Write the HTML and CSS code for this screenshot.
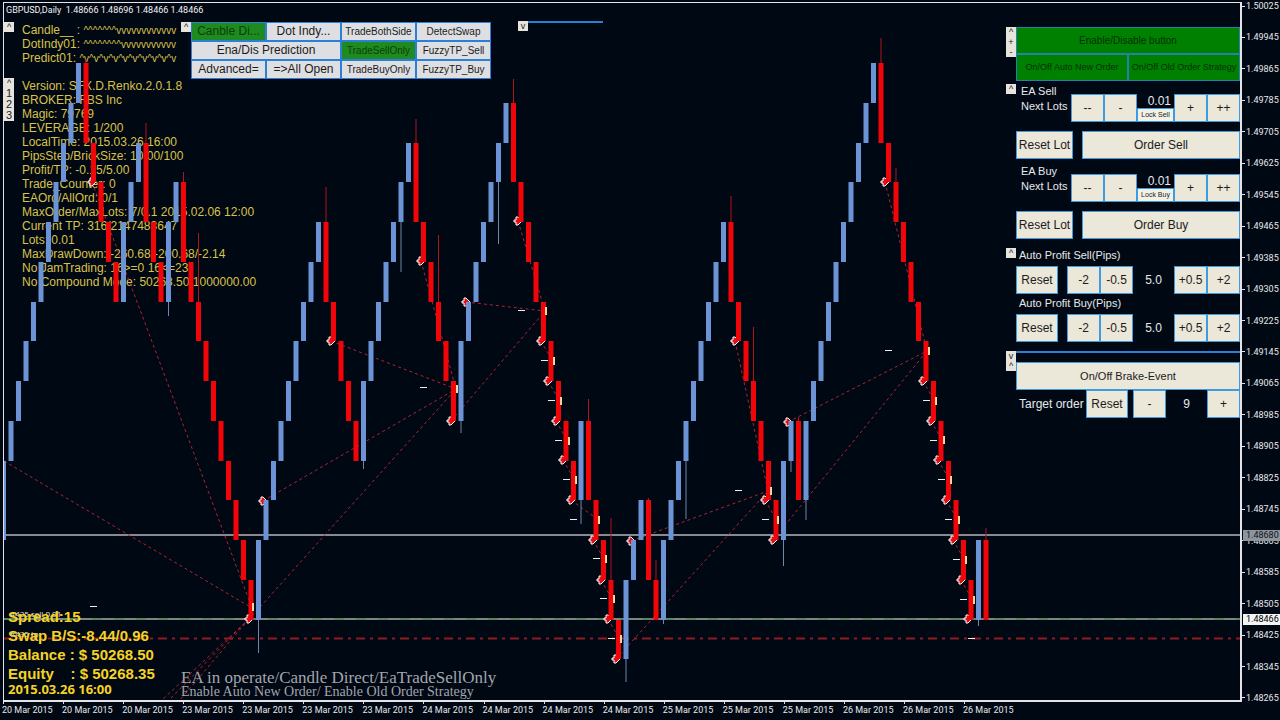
FILE: index.html
```html
<!DOCTYPE html>
<html lang="en">
<head>
<meta charset="utf-8">
<title>GBPUSD,Daily</title>
<link rel="stylesheet" href="styles.css">
</head>
<body>
<main class="terminal">
  <section class="chart">
    <div class="info">
      <p>Candle__ : <span class="wave">^^^^^^^vvvvvvvvvvvv</span></p>
      <p>DotIndy01: <span class="wave">^^^^^^^^vvvvvvvvvvv</span></p>
      <p>Predict01: <span class="wave">^v^v^v^v^v^v^v^v^v^v</span></p>
      <p class="gap">Version: SFX.D.Renko.2.0.1.8</p>
      <p>BROKER: FBS Inc</p>
      <p>Magic: 79769</p>
      <p>LEVERAGE: 1/200</p>
      <p>LocalTime: 2015.03.26 16:00</p>
      <p>PipsStep/BrickSize: 10.00/100</p>
      <p>Profit/TP: -0.15/5.00</p>
      <p>Trade_Counter: 0</p>
      <p>EAOrd/AllOrd: 0/1</p>
      <p>MaxOrder/MaxLots: 7/0.1 2015.02.06 12:00</p>
      <p>Current TP: 316/2147483647</p>
      <p>Lots: 0.01</p>
      <p>MaxDrawDown: -260.68/-200.68/-2.14</p>
      <p>No JamTrading: 16&gt;=0 16&lt;=23</p>
      <p>No Compound Mode: 50268.50 1000000.00</p>
    </div>

    <svg class="plot" viewBox="4 3 1236 697" preserveAspectRatio="none" role="img" aria-label="GBPUSD renko chart">
      <path class="ask" d="M4 535H1240"/>
      <path class="bid" d="M4 619H1240"/>
      <path class="bid-dash" d="M4 619H1240"/>
      <path class="stop" d="M4 638.500H1240"/>
      <path id="trades" class="trades"/>
      <path id="entries" class="entries"/>
      <path id="wicksUp" class="wick-up"/>
      <path id="wicksDown" class="wick-down"/>
      <path id="up" class="up"/>
      <path id="down" class="down"/>
      <path id="targets" class="targets"/>
      <path id="exits" class="exits"/>
    </svg>

    <h1 class="title">GBPUSD,Daily&nbsp; 1.48666 1.48696 1.48466 1.48466</h1>

    <button class="tiny left-top">^</button>
    <div class="stack left-pages">
      <button class="tiny">^</button><button class="tiny page">1</button><button class="tiny page">2</button><button class="tiny page">3</button>
    </div>

    <div class="modes">
      <button class="tiny">^</button>
      <div class="mode-grid">
        <button class="on">Canble Di...</button><button>Dot Indy...</button><button class="small">TradeBothSide</button><button class="small">DetectSwap</button>
        <button class="wide">Ena/Dis Prediction</button><button class="small on">TradeSellOnly</button><button class="small">FuzzyTP_Sell</button>
        <button>Advanced=</button><button>=&gt;All Open</button><button class="small">TradeBuyOnly</button><button class="small">FuzzyTP_Buy</button>
      </div>
    </div>
    <div class="folded"><button class="tiny">v</button><span class="fold-line"></span></div>

    <aside class="panel">
      <div class="group">
        <div class="stack"><button class="tiny">^</button><button class="tiny">+</button><button class="tiny">-</button></div>
        <div class="body">
          <button class="btn go">Enable/Disable button</button>
          <div class="row"><button class="btn go small half">On/Off Auto New Order</button><button class="btn go small half">On/Off Old Order Strategy</button></div>
        </div>
      </div>
      <div class="group lots">
        <div class="stack"><button class="tiny">^</button></div>
        <div class="body">
          <div class="row lot-row">
            <p class="lot-label">EA Sell<br>Next Lots</p>
            <button class="btn step">--</button><button class="btn step">-</button>
            <div class="lot"><output>0.01</output><button class="lock">Lock Sell</button></div>
            <button class="btn step">+</button><button class="btn step">++</button>
          </div>
          <div class="row order-row"><button class="btn reset-lot">Reset Lot</button><button class="btn fill">Order Sell</button></div>
          <div class="row lot-row">
            <p class="lot-label">EA Buy<br>Next Lots</p>
            <button class="btn step">--</button><button class="btn step">-</button>
            <div class="lot"><output>0.01</output><button class="lock">Lock Buy</button></div>
            <button class="btn step">+</button><button class="btn step">++</button>
          </div>
          <div class="row order-row"><button class="btn reset-lot">Reset Lot</button><button class="btn fill">Order Buy</button></div>
        </div>
      </div>
      <div class="group profit">
        <div class="stack"><button class="tiny">^</button></div>
        <div class="body">
          <p class="label">Auto Profit Sell(Pips)</p>
          <div class="row"><button class="btn reset">Reset</button><button class="btn step">-2</button><button class="btn step">-0.5</button><output class="value">5.0</output><button class="btn step">+0.5</button><button class="btn step">+2</button></div>
          <p class="label second">Auto Profit Buy(Pips)</p>
          <div class="row"><button class="btn reset">Reset</button><button class="btn step">-2</button><button class="btn step">-0.5</button><output class="value">5.0</output><button class="btn step">+0.5</button><button class="btn step">+2</button></div>
        </div>
      </div>
      <div class="group brake">
        <div class="stack"><button class="tiny">v</button><button class="tiny">^</button></div>
        <div class="body">
          <div class="rule"></div>
          <button class="btn event">On/Off Brake-Event</button>
          <div class="row target"><p class="target-label">Target order</p><button class="btn reset">Reset</button><button class="btn step">-</button><output class="value">9</output><button class="btn step">+</button></div>
        </div>
      </div>
    </aside>

    <p class="order-tag first">#435 sell 0.01</p>
    <p class="order-tag second">#435 tp</p>
    <div class="account">
      <p>Spread:15</p>
      <p>Swap B/S:-8.44/0.96</p>
      <p>Balance : $ 50268.50</p>
      <p>Equity &nbsp;&nbsp; : $ 50268.35</p>
      <p class="clock">2015.03.26 16:00</p>
    </div>
    <div class="status">
      <p class="status-main">EA in operate/Candle Direct/EaTradeSellOnly</p>
      <p class="status-sub">Enable Auto New Order/ Enable Old Order Strategy</p>
    </div>
  </section>

  <div class="prices">
    <ol class="price-list">
      <li>1.50025</li><li>1.49945</li><li>1.49865</li><li>1.49785</li><li>1.49705</li><li>1.49625</li><li>1.49545</li><li>1.49465</li><li>1.49385</li><li>1.49305</li><li>1.49225</li><li>1.49145</li><li>1.49065</li><li>1.48985</li><li>1.48905</li><li>1.48825</li><li>1.48745</li><li>1.48665</li><li>1.48585</li><li>1.48505</li><li>1.48425</li><li>1.48345</li><li>1.48265</li>
    </ol>
    <span class="tag ask-tag">1.48680</span>
    <span class="tag bid-tag">1.48466</span>
  </div>

  <ol class="times">
    <li>20 Mar 2015</li><li>20 Mar 2015</li><li>20 Mar 2015</li><li>23 Mar 2015</li><li>23 Mar 2015</li><li>23 Mar 2015</li><li>23 Mar 2015</li><li>24 Mar 2015</li><li>24 Mar 2015</li><li>24 Mar 2015</li><li>24 Mar 2015</li><li>25 Mar 2015</li><li>25 Mar 2015</li><li>25 Mar 2015</li><li>26 Mar 2015</li><li>26 Mar 2015</li><li>26 Mar 2015</li>
  </ol>
</main>
<script src="chart.js"></script>
</body>
</html>
```
FILE: styles.css
```css
* { box-sizing: border-box; margin: 0; padding: 0; }
body { background: #000814; color: #e8e8ea; font: 12px/15px "Liberation Sans", Arial, sans-serif; }
ol { list-style: none; }
button { font: inherit; color: #1c1c1c; cursor: pointer; white-space: nowrap; overflow: hidden; }

.terminal {
  display: grid;
  grid-template-columns: minmax(0, 1fr) 38px;
  grid-template-rows: minmax(0, 1fr) 18px;
  height: 100vh;
  min-height: 700px;
  padding: 2px 0 0 3px;
}
.chart { position: relative; border: 1px solid #e4e4e8; border-right-width: 2px; border-bottom-width: 2px; overflow: hidden; }
.plot { position: absolute; inset: 0; width: 100%; height: 100%; }
.plot path { fill: none; }
.plot .up { stroke: #6b93d6; stroke-width: 5; }
.plot .down { stroke: #f20509; stroke-width: 5; }
.plot .wick-up { stroke: #6f86ad; }
.plot .wick-down { stroke: #b0141c; }
.plot .ask { stroke: #858a93; stroke-width: 2; }
.plot .bid { stroke: #7d8781; stroke-width: 2; }
.plot .bid-dash { stroke: #3d8045; stroke-dasharray: 10 12; }
.plot .stop { stroke: #8f1a22; stroke-width: 2; stroke-dasharray: 9 5 3 5; }
.plot .trades { stroke: #b3222e; stroke-dasharray: 3 3; }
.plot .targets { stroke: #eef0ea; }
.plot .exits { stroke: #f1d9a0; stroke-width: 2; }
.plot .entries { fill: #e01018; stroke: #fff; }

.title { position: absolute; left: 2px; top: 1px; font: 9px/12px Roboto, "Noto Sans", sans-serif; color: #f2f2f2; }
.info { position: absolute; left: 18px; top: 20px; color: #d9c24a; line-height: 14px; white-space: nowrap; }
.info .gap { margin-top: 14px; }
.info .wave { font-size: 10px; line-height: 10px; }

.tiny { display: block; width: 10px; height: 10px; border: 0; background: #e6e4dc; color: #222; font-size: 9px; line-height: 10px; text-align: center; }
.tiny.page { height: 11px; font-size: 11px; line-height: 11px; }
.stack { display: flex; flex-direction: column; width: 10px; }
.left-top { position: absolute; left: 0; top: 19px; }
.left-pages { position: absolute; left: 0; top: 75px; }

.modes { position: absolute; left: 177px; top: 19px; display: flex; }
.mode-grid { display: grid; grid-template-columns: repeat(4, 75px); grid-auto-rows: 19px; }
.mode-grid button { border: 1px solid #2b7fd6; background: #dedfe2; font-size: 12px; line-height: 15px; }
.mode-grid .wide { grid-column: span 2; }
.mode-grid .on { background: #1f8a1f; color: #0a3f0a; }
.mode-grid .small { font-size: 10px; }
.folded { position: absolute; left: 514px; top: 18px; display: flex; }
.fold-line { width: 75px; height: 2px; background: #2b7fd6; }

.panel { position: absolute; right: 0; top: 24px; width: 234px; }
.group { display: flex; }
.body { flex: 1; min-width: 0; }
.row { display: flex; }
.btn { display: block; width: 100%; height: 28px; border: 1px solid #3f9be0; background: #ebe7d9; text-align: center; }
.btn.go { height: 27px; background: #008000; border-color: #2680a8; color: #033003; font-size: 10px; }
.btn.go.small { font-size: 9px; }
.btn.half { flex: 1; width: auto; }
.btn.step { flex: none; width: 33px; }
.btn.fill { flex: 1; }
.btn.event { font-size: 11px; }
.btn.reset { flex: none; width: 42px; }
.btn.reset-lot { flex: none; width: 57px; }
.lots { margin-top: 3px; }
.lot-row { align-items: flex-end; height: 38px; }
.lot-label { flex: 1; align-self: flex-start; padding-left: 5px; font-size: 11px; white-space: nowrap; }
.lot { width: 37px; text-align: right; }
.lot output { display: block; padding-right: 3px; line-height: 14px; }
.lock { display: block; width: 37px; height: 14px; border: 1px solid #3f9be0; background: #f3f0e6; font-size: 7px; line-height: 12px; text-align: center; }
.order-row { gap: 9px; margin: 9px 0 5px; }
.profit { margin-top: 4px; }
.label { padding-left: 3px; margin-bottom: 3px; font-size: 11px; }
.label.second { margin-top: 2px; }
.profit .reset { margin-right: 9px; }
.value { flex: 1; text-align: center; line-height: 28px; }
.brake { margin-top: 9px; }
.rule { height: 2px; margin-bottom: 9px; background: #2b7fd6; }
.target-label { flex: 1; padding-left: 3px; line-height: 28px; white-space: nowrap; }
.target .reset { margin-right: 5px; }
.target .value { flex: none; width: 41px; }

.account { position: absolute; left: 4px; bottom: 4px; color: #f5d324; font-weight: bold; font-size: 15px; line-height: 19px; white-space: nowrap; }
.account .clock { font: bold 13px/13px "Open Sans", "Noto Sans", sans-serif; }
.order-tag { position: absolute; left: 6px; font: 8px/10px "Open Sans", "Noto Sans", sans-serif; color: #e8e8e8; }
.order-tag.first { bottom: 81px; }
.order-tag.second { bottom: 61px; }
.status { position: absolute; left: 177px; bottom: 1px; font-family: "Liberation Serif", "Times New Roman", serif; color: #a3a6ad; white-space: nowrap; }
.status-main { font-size: 17px; line-height: 15px; }
.status-sub { font-size: 14px; line-height: 14px; }

.prices { position: relative; font: 9px/12px Roboto, "Noto Sans", sans-serif; }
.price-list { display: flex; flex-direction: column; justify-content: space-between; height: calc(100% + 4px); margin-top: -2px; }
.price-list li { display: flex; align-items: center; gap: 1px; height: 12px; }
.price-list li::before { content: ""; width: 3px; height: 1px; background: #e4e4e8; }
.tag { position: absolute; left: 1px; right: 0; height: 11px; padding-left: 3px; line-height: 11px; }
.ask-tag { top: 75.400%; background: #8f959d; color: #10141c; }
.bid-tag { top: 87.400%; background: #f4f4f4; color: #000; }

.times { grid-column: 1 / -1; display: flex; margin-left: -1px; font: 9px/12px Roboto, "Noto Sans", sans-serif; }
.times li { flex: 0 0 4.700%; white-space: nowrap; }
.times li::before { content: ""; display: block; width: 1px; height: 2px; margin-left: 1px; background: #e4e4e8; }
```
FILE: chart.js
```js
// Brick geometry: level 0 is the highest brick edge.
const BRICK = 39.75, TOP = 63, STEP = 7.5, FIRST = 3.5;
const levelY = k => Math.round(TOP + BRICK * k);
const barX = i => FIRST + STEP * i;
const line = (x1, y1, x2, y2) => `M${x1} ${y1}L${x2} ${y2}`;
const put = (id, d) => document.getElementById(id).setAttribute('d', d);

// Lengths of alternating runs, starting with a rising one.
const runs = [11, 5, 3, 3, 2, 10, 9, 5, 7, 6, 7, 9, 1, 5, 3, 2, 9, 7, 2, 1, 10, 13, 1, 1];
// Far end of the wick by bar index.
const wicks = {
  0: 566, 11: 59, 19: 123, 22: 316, 24: 172, 26: 233, 34: 653, 43: 187, 48: 469, 53: 272,
  55: 119, 58: 235, 61: 433, 66: 244, 68: 79, 77: 524, 78: 399, 81: 518, 83: 682, 86: 498,
  87: 560, 88: 624, 91: 519, 97: 196, 100: 327, 104: 566, 105: 472, 106: 417, 107: 520,
  117: 38, 119: 168, 130: 626, 131: 528
};

let level = 12, index = 0;
let up = '', down = '', wickUp = '', wickDown = '';
runs.forEach((count, r) => {
  const rising = r % 2 === 0;
  for (let n = 0; n < count; n++, index++) {
    const next = level + (rising ? -1 : 1) * (n === 0 ? 2 : 1);
    const x = barX(index);
    const body = line(x, levelY(level), x, levelY(next));
    if (rising) up += body; else down += body;
    if (wicks[index]) {
      const wick = line(x, levelY(level), x, wicks[index]);
      if (rising) wickUp += wick; else wickDown += wick;
    }
    level = next;
  }
});
put('up', up);
put('down', down);
put('wicksUp', wickUp);
put('wicksDown', wickDown);

const entries = [
  [92, 182], [249, 619], [263, 501], [331, 341], [421, 261], [451, 421], [466, 302], [518, 221],
  [541, 341], [548, 381], [556, 421], [563, 460], [571, 500], [593, 540], [601, 580], [608, 619],
  [616, 659], [631, 541], [735, 341], [788, 422], [765, 500], [773, 540], [885, 182], [923, 381],
  [931, 421], [938, 460], [946, 500], [953, 540], [961, 580], [968, 619]
];
put('entries', entries.map(([x, y]) => `M${x - 4} ${y - 1}h2v-3h2l4 4l-4 4h-2v-3h-2z`).join(''));

const exits = [
  [253, 607], [457, 389], [546, 311], [554, 361], [561, 401], [569, 441], [576, 480], [599, 520],
  [606, 559], [614, 599], [621, 639], [771, 491], [778, 520], [929, 351], [936, 401], [944, 440],
  [951, 480], [959, 520], [966, 560], [974, 600]
];
put('exits', exits.map(([x, y]) => line(x, y - 4, x, y + 4)).join(''));

const targets = [
  [93, 607], [423, 388], [521, 311], [544, 361], [551, 401], [558, 441], [566, 480], [573, 520],
  [596, 559], [603, 599], [611, 639], [738, 491], [765, 520], [888, 351], [926, 401], [933, 441],
  [941, 480], [948, 520], [956, 560], [963, 600], [971, 639]
];
put('targets', targets.map(([x, y]) => line(x - 3, y - 0.5, x + 4, y - 0.5)).join(''));

const trades = [
  [4, 461, 252, 608], [92, 182, 252, 608], [263, 501, 456, 389], [331, 341, 456, 389],
  [252, 616, 456, 389], [466, 302, 545, 311], [451, 421, 545, 311], [421, 261, 456, 389],
  [518, 221, 545, 311], [616, 659, 768, 491], [631, 541, 768, 491], [735, 341, 768, 491],
  [788, 422, 927, 351], [773, 540, 927, 351], [885, 182, 927, 351], [249, 619, 162, 700],
  [249, 619, 169, 700], [249, 619, 180, 700]
];
const steps = entries.filter(([x]) => (x > 538 && x < 612) || (x > 920 && x < 965) || x === 765)
  .map(([x, y]) => line(x, y, x + (x === 571 ? 26 : 11), y + 19));
put('trades', trades.map(t => line(...t)).concat(steps).join(''));
```
